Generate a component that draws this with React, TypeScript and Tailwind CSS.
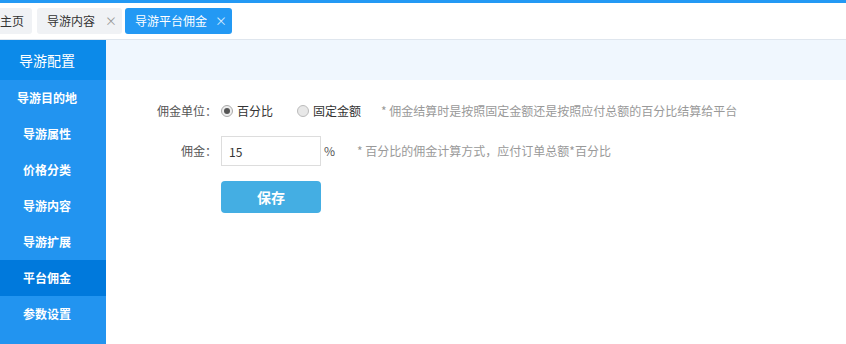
const menu = ["导游目的地", "导游属性", "价格分类", "导游内容", "导游扩展", "平台佣金", "参数设置"];

export default function App() {
  return (
    <div className="w-[846px] h-[344px] overflow-hidden flex flex-col bg-white text-[#333] font-['Noto_Sans_CJK_SC',sans-serif]">
      <div className="h-[3px] bg-[#2399f4]" />
      <div className="h-[37px] flex items-center gap-[3px] border-b border-[#dfe6ee] -ml-[8px]">
        <div className="h-[26px] px-[8px] rounded-[3px] bg-[#f0f2f5] flex items-center text-[12px] text-[#333]">
          主页
        </div>
        <div className="ml-[2px] h-[26px] pl-[10px] pr-[5px] rounded-[3px] bg-[#f0f2f5] flex items-center gap-[10px] text-[12px] text-[#333]">
          导游内容<span className="text-[#999] text-[12px]">×</span>
        </div>
        <div className="h-[26px] pl-[10px] pr-[5px] rounded-[3px] bg-[#2399f4] flex items-center gap-[8px] text-[12px] text-white">
          导游平台佣金<span className="text-[#d8ecfd] text-[12px]">×</span>
        </div>
      </div>
      <div className="flex-1 flex">
        <div className="w-[106px] bg-[#2294f0] text-white flex flex-col">
          <div className="h-[40px] bg-[#0c8ae9] flex items-center justify-center pr-[12px] text-[14px]">导游配置</div>
          {menu.map((m) => (
            <div
              key={m}
              className={
                m === "平台佣金"
                  ? "h-[36px] bg-[#0079dc] flex items-center justify-center pr-[12px] text-[12px] font-semibold"
                  : "h-[36px] flex items-center justify-center pr-[12px] text-[12px] font-semibold"
              }
            >
              {m}
            </div>
          ))}
        </div>
        <div className="flex-1 flex flex-col">
          <div className="h-[40px] bg-[#f0f7fe]" />
          <div className="pt-[21px] flex flex-col text-[12px]">
            <div className="flex items-center h-[20px]">
              <span className="w-[111px] text-right text-[#555]">佣金单位：</span>
              <span className="ml-[4px] w-[12px] h-[12px] rounded-full border border-[#aaa] bg-[#eee] flex items-center justify-center">
                <span className="w-[6px] h-[6px] rounded-full bg-[#555]" />
              </span>
              <span className="ml-[4px]">百分比</span>
              <span className="ml-[24px] w-[12px] h-[12px] rounded-full border border-[#bbb] bg-[#e8e8e8]" />
              <span className="ml-[4px]">固定金额</span>
              <span className="ml-[20px] text-[#999]">* 佣金结算时是按照固定金额还是按照应付总额的百分比结算给平台</span>
            </div>
            <div className="flex items-center mt-[15px] h-[30px]">
              <span className="w-[111px] text-right text-[#555]">佣金：</span>
              <input
                defaultValue="15"
                className="ml-[4px] w-[100px] h-[30px] border border-[#ddd] px-[7px] text-[12px] text-[#333] outline-none"
              />
              <span className="ml-[3px] text-[#555]">%</span>
              <span className="ml-[22px] text-[#999]">* 百分比的佣金计算方式，应付订单总额*百分比</span>
            </div>
            <div className="flex mt-[15px] pl-[115px]">
              <button className="w-[100px] h-[32px] rounded-[4px] bg-[#44aee3] text-white text-[14px] font-semibold">保存</button>
            </div>
          </div>
        </div>
      </div>
    </div>
  );
}
